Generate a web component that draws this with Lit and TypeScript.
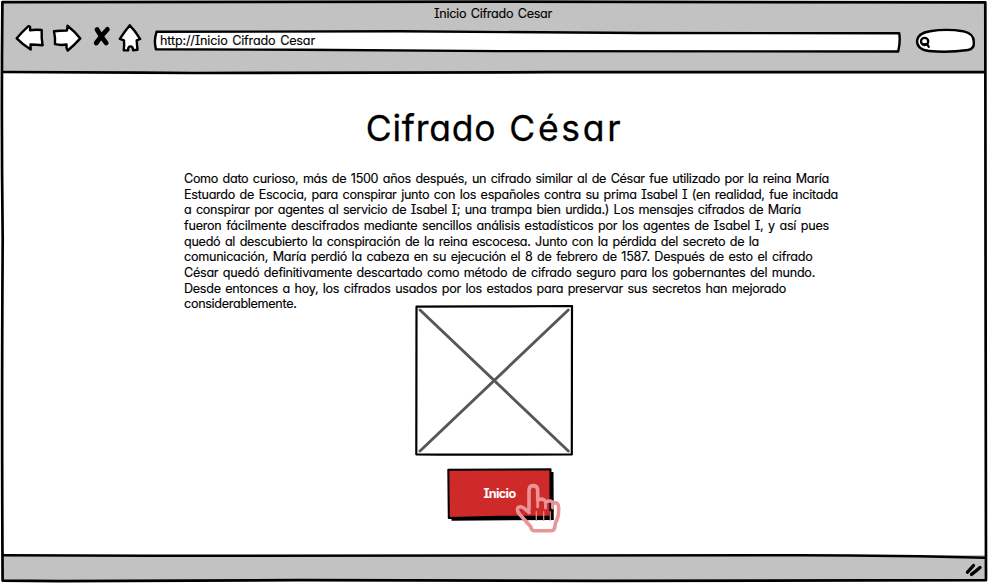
import { LitElement, html, css, svg } from "lit";
import { customElement, property, query } from "lit/decorators.js";

/** One line of text whose tracking is adjusted to fill a given measure. */
@customElement("fit-line")
export class FitLine extends LitElement {
  @property() text = "";
  @property({ type: Number }) measure = 0;
  @query(".run") run!: HTMLSpanElement;

  static styles = css`
    :host { display: block; white-space: nowrap; }
    .run { display: inline-block; }
  `;

  protected updated() {
    this.run.style.letterSpacing = "0px";
    const natural = this.run.getBoundingClientRect().width;
    this.run.style.letterSpacing = `${(this.measure - natural) / this.text.length}px`;
  }

  render() {
    return html`<span class="run">${this.text}</span>`;
  }
}

const LINES: [string, number][] = [
  ["Como dato curioso, más de 1500 años después, un cifrado similar al de César fue utilizado por la reina María", 645],
  ["Estuardo de Escocia, para conspirar junto con los españoles contra su prima Isabel I (en realidad, fue incitada", 654],
  ["a conspirar por agentes al servicio de Isabel I; una trampa bien urdida.) Los mensajes cifrados de María", 617],
  ["fueron fácilmente descifrados mediante sencillos análisis estadísticos por los agentes de Isabel I, y así pues", 645],
  ["quedó al descubierto la conspiración de la reina escocesa. Junto con la pérdida del secreto de la", 575],
  ["comunicación, María perdió la cabeza en su ejecución el 8 de febrero de 1587. Después de esto el cifrado", 628.5],
  ["César quedó definitivamente descartado como método de cifrado seguro para los gobernantes del mundo.", 631],
  ["Desde entonces a hoy, los cifrados usados por los estados para preservar sus secretos han mejorado", 602],
  ["considerablemente.", 112.5],
];

@customElement("app-root")
export class AppRoot extends LitElement {
  static styles = css`
    :host {
      display: block;
      width: 988px;
      height: 583px;
      overflow: hidden;
      background: #fff;
      color: #000;
      font-family: Inter, "Liberation Sans", sans-serif;
      font-size: 12.6px;
      word-spacing: 1.3px;
      -webkit-text-stroke: 0.15px currentColor;
      font-feature-settings: "cv11" 1, "cv08" 1, "ss03" 0;
    }
    svg { display: block; overflow: visible; }
    .ink { fill: none; stroke: #000; stroke-linecap: round; stroke-linejoin: round; }
    .paper { fill: #fff; stroke: #000; stroke-width: 2.4; stroke-linejoin: round; stroke-linecap: round; }
    .window { position: relative; box-sizing: border-box; height: 583px; padding: 2px 2px 2px 3px; display: flex; flex-direction: column; }
    .frame { position: absolute; left: 0; top: 0; pointer-events: none; }
    .bar { height: 71px; background: #c2c2c2; }
    .title { display: flex; justify-content: center; height: 22px; line-height: 24px; margin-right: 3px; }
    .tools { display: flex; align-items: flex-start; padding-left: 12px; }
    .address { display: grid; width: 748px; height: 22px; margin: 6px 0 0 10px; }
    .address > *, .button > * { grid-area: 1 / 1; }
    .address fit-line { position: relative; line-height: 21px; padding-left: 7px; }
    .search { margin: 5px 0 0 14px; }
    .page { flex: 1; display: flex; flex-direction: column; align-items: center; }
    h1 { display: flex; gap: 13px; margin: 32px 0 0 0; font-size: 35.5px; line-height: 47px; height: 46px; font-weight: 400; -webkit-text-stroke: 0.3px currentColor; }
    .copy { width: 655px; margin: 20px 0 0 34px; line-height: 15.65px; height: 142px; }
    .picture { margin-top: -8px; margin-left: -2px; }
    .button { display: grid; width: 106px; height: 53px; margin: 12px 0 0 11px; }
    .button fit-line { position: relative; font-weight: 700; color: #fff; line-height: 51px; padding-left: 36.5px; -webkit-text-stroke: 0; }
    .hand { position: relative; left: 68px; top: 15px; }
    .skin { fill: none; stroke: #e99597; stroke-linejoin: round; stroke-linecap: round; }
    .status { height: 26px; background: #c2c2c2; display: flex; justify-content: flex-end; align-items: flex-start; }
    .grip { margin: 8px 3px 0 0; }
    .cross { fill: none; stroke: #575757; stroke-width: 2.9; stroke-linecap: round; }
    .face { fill: #cf2a2a; stroke: #000; stroke-width: 2; stroke-linejoin: round; }
  `;

  private get navigation() {
    return html`<svg width="128" height="28" viewBox="15 23 128 28">
      <path class="paper" d="M16.7 37.3 Q22 31 28.5 25.2 Q30.8 24.6 30 29.2 Q36 28.3 41.7 29 Q41.3 37 42.6 44.2 Q36 43.6 30.5 43.5 L30.7 48.5 Q23 43.8 16.7 37.3Z"/>
      <path class="paper" d="M54 30.2 Q60 29.8 67 29.5 L67.5 24.7 Q75 30.6 80.3 37.4 Q74.6 43.8 67.8 49.5 Q66.2 48 66.5 43.5 Q60.5 44.5 55 43.2 Q55.4 36.5 54 30.2Z"/>
      <path class="ink" stroke-width="4.8" d="M97 28.6 Q102 37 106.2 42 M107.4 28.4 Q101.5 34.5 96.2 42"/>
      <path class="paper" d="M129.8 24.3 Q135.4 30.1 140.2 38 L136.7 39.3 Q137 44 137.5 48.7 L133 49.2 Q133 45.3 130.2 45.4 Q127.8 45.6 128.2 49.4 L123.8 49.2 Q124.4 44 124 39.3 L119.8 37.8 Q124.8 30.4 129.8 24.3Z"/>
    </svg>`;
  }

  private get strips() {
    return svg`<g class="ink">
      <path stroke-width="2.7" d="M2.4 2.2 L500 1.7 L985.3 2.4 Q986 150 985.6 300 L986 580.2 L600 580.8 L300 580.2 L60 581.2 L2.6 580.6 Q1.6 400 2.7 240 Q1.2 120 2.4 2.2Z"/>
      <path stroke-width="2.7" d="M3 72 L140 72.6 L195 73 L550 72.2 L985 72.2"/>
      <path stroke-width="2.5" d="M3 555.3 L150 555.8 L500 555.5 L800 555.2 Q900 555.2 985 557.7"/>
    </g>`;
  }

  render() {
    return html`<div class="window">
      <div class="bar">
        <div class="title"><fit-line text="Inicio Cifrado Cesar" .measure=${118}></fit-line></div>
        <div class="tools">
          ${this.navigation}
          <div class="address">
            <svg width="748" height="22" viewBox="153 30 748 22">
              <path class="paper" d="M156.5 31.8 L400 31.3 L640 33 L899.2 33.2 Q900.6 41 898.2 51.5 L500 51.1 L300 49.8 L156 49.3 Q153.6 41 156.5 31.8Z"/>
            </svg>
            <fit-line text="http://Inicio Cifrado Cesar" .measure=${155}></fit-line>
          </div>
          <svg class="search" width="60" height="24" viewBox="915 29 60 24">
            <path class="paper" d="M917 41 Q918 33 930 31.3 Q946 28.6 963 31.2 Q974 33.5 973.8 42 Q974.5 49 968 50 Q948 53 929 51 Q917 49.5 917 41Z"/>
            <circle class="ink" stroke-width="2.3" cx="924.6" cy="41.4" r="3.6"/>
            <path class="ink" stroke-width="2.3" d="M923 44.4 L927.2 44.2 L928.7 46.8"/>
          </svg>
        </div>
      </div>
      <div class="page">
        <h1>
          <fit-line text="Cifrado" .measure=${130.5}></fit-line>
          <fit-line text="César" .measure=${114}></fit-line>
        </h1>
        <div class="copy">
          ${LINES.map(([text, measure]) => html`<fit-line .text=${text} .measure=${measure}></fit-line>`)}
        </div>
        <svg class="picture" width="158" height="151" viewBox="415 305 158 151">
          <path class="cross" d="M420 310 L568.3 451 M568.3 310 L420 451"/>
          <path class="ink" stroke-width="2.2" d="M416.5 306.7 L485 306.4 L572 306 L571.8 454.5 L440 454.7 L416.3 454.3Z"/>
        </svg>
        <div class="button">
          <svg width="106" height="53" viewBox="447 468 106 53">
            <path d="M451 472 H553.5 L553.8 520 L451.5 520.7Z"/>
            <path class="face" d="M448.3 469.8 L550.5 469.3 L550.4 516.5 L500 516.7 L448.8 518Z"/>
          </svg>
          <fit-line text="Inicio" .measure=${32}></fit-line>
          <svg class="hand" width="46" height="50" viewBox="515 483 46 50">
            <path class="skin" stroke-width="3.6" d="M529 510 V491 Q529 485.7 533.3 485.6 Q537.7 485.7 537.7 491 V500 Q544 497.5 545.5 502 Q551.5 499.5 553 503.3 Q559 501.5 558.6 508 Q559 517 555.5 523 L554.6 528 Q554 530.7 551 530.7 H534 Q531.5 530.5 530.5 526.5 L519 513.5 Q515.8 508.5 519 507 Q522 505.5 529 512.5"/>
            <path class="skin" stroke-width="2.8" d="M537.7 499 V507 M545.5 501.5 V508 M552.5 503 V508"/>
            <path class="skin" stroke-width="1.2" d="M536.3 511.5 V520.5 M543.7 511.5 V520.5 M550.3 511.5 V520.5"/>
          </svg>
        </div>
      </div>
      <div class="status">
        <svg class="grip" width="18" height="14" viewBox="965 563 18 14">
          <path class="ink" stroke-width="3.3" d="M967.5 572.2 L973.5 565.5 M971.5 574.4 Q976 571 980 567.4"/>
        </svg>
      </div>
      <svg class="frame" width="988" height="583" viewBox="0 0 988 583">${this.strips}</svg>
    </div>`;
  }
}
